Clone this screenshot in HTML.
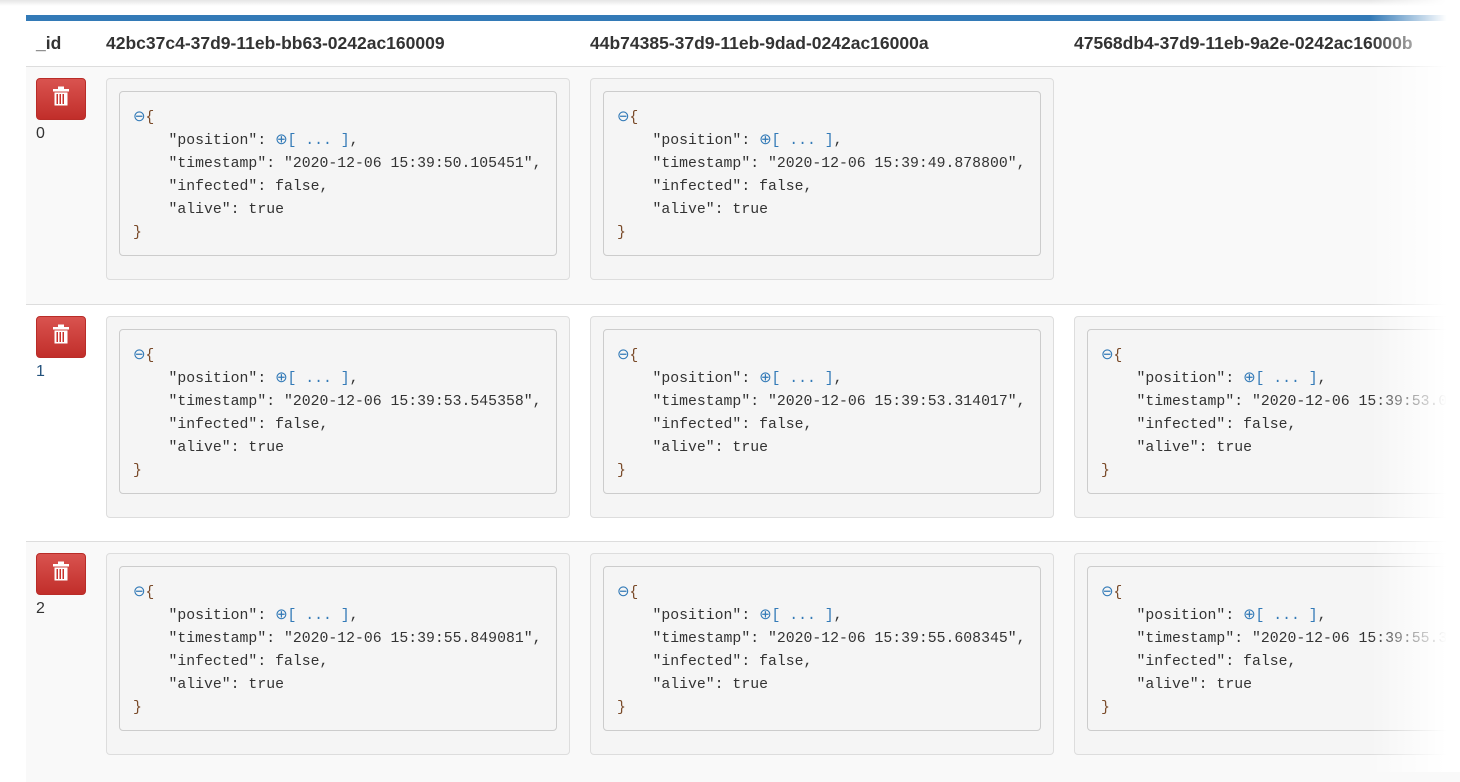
<!DOCTYPE html><html><head><style>
body{margin:0;width:1460px;height:772px;overflow:hidden;background:#fff;font-family:"Liberation Sans",sans-serif;position:relative}
.shadow{position:absolute;left:0;top:0;width:1460px;height:6px;background:linear-gradient(#e6e6e6,#fff)}
.bar{position:absolute;left:26px;top:15px;width:1440px;height:6px;background:#337ab7}
.hdr{position:absolute;top:21px;left:26px;width:1440px;height:45px;border-bottom:2px solid #ddd;font-weight:bold;font-size:17.5px;color:#333}
.hdr span{position:absolute;top:12px}
.row{position:absolute;left:26px;width:1440px;border-bottom:1px solid #ddd}
.btn{position:absolute;left:10px;top:11px;width:50px;height:42px;border-radius:4px;background:linear-gradient(#d9534f,#c12e2a);border:1px solid #b92c28;box-sizing:border-box}
.idx{position:absolute;left:10px;top:58px;font-size:16px;color:#333}
.cell{position:absolute;top:11px;width:464px;height:202px;box-sizing:border-box;background:#f5f5f5;border:1px solid #ddd;border-radius:4px}
.pre{position:absolute;left:12px;top:12px;width:438px;height:165px;box-sizing:border-box;border:1px solid #ccc;border-radius:4px;background:#f5f5f5;padding:15px 0 0 13px;font-family:"Liberation Mono",monospace;font-size:14.8px;line-height:23px;color:#333;white-space:pre}
.b{color:#337ab7}.br{color:#7a4b2a}
.fade{position:absolute;right:0;top:0;width:90px;height:772px;background:linear-gradient(90deg,rgba(255,255,255,0),#fff 85%)}
</style></head><body>
<div class="shadow"></div><div class="bar"></div>
<div class="hdr"><span style="left:10px">_id</span><span style="left:80px">42bc37c4-37d9-11eb-bb63-0242ac160009</span><span style="left:564px">44b74385-37d9-11eb-9dad-0242ac16000a</span><span style="left:1048px">47568db4-37d9-11eb-9a2e-0242ac16000b</span></div>

<div class="row" style="top:67px;height:237px;background:#f9f9f9">
<div class="btn"><svg width="48" height="40"><g fill="#fff"><rect x="16" y="10" width="16" height="2.5"/><rect x="21" y="7.5" width="6" height="3"/><rect x="17.5" y="13.5" width="13" height="13"/></g><g fill="#c9302c"><rect x="19.5" y="15" width="1.5" height="10"/><rect x="22.5" y="15" width="1.5" height="10"/><rect x="25.5" y="15" width="1.5" height="10"/></g></svg></div>
<div class="idx">0</div>
<div class="cell" style="left:80px"><div class="pre"><span class="b">⊖</span><span class="br">{</span>
    "position": <span class="b">⊕[ ... ]</span>,
    "timestamp": "2020-12-06 15:39:50.105451",
    "infected": false,
    "alive": true
<span class="br">}</span></div></div>
<div class="cell" style="left:564px"><div class="pre"><span class="b">⊖</span><span class="br">{</span>
    "position": <span class="b">⊕[ ... ]</span>,
    "timestamp": "2020-12-06 15:39:49.878800",
    "infected": false,
    "alive": true
<span class="br">}</span></div></div>
</div>

<div class="row" style="top:305px;height:236px;background:#fff">
<div class="btn"><svg width="48" height="40"><g fill="#fff"><rect x="16" y="10" width="16" height="2.5"/><rect x="21" y="7.5" width="6" height="3"/><rect x="17.5" y="13.5" width="13" height="13"/></g><g fill="#c9302c"><rect x="19.5" y="15" width="1.5" height="10"/><rect x="22.5" y="15" width="1.5" height="10"/><rect x="25.5" y="15" width="1.5" height="10"/></g></svg></div>
<div class="idx" style="color:#23527c">1</div>
<div class="cell" style="left:80px"><div class="pre"><span class="b">⊖</span><span class="br">{</span>
    "position": <span class="b">⊕[ ... ]</span>,
    "timestamp": "2020-12-06 15:39:53.545358",
    "infected": false,
    "alive": true
<span class="br">}</span></div></div>
<div class="cell" style="left:564px"><div class="pre"><span class="b">⊖</span><span class="br">{</span>
    "position": <span class="b">⊕[ ... ]</span>,
    "timestamp": "2020-12-06 15:39:53.314017",
    "infected": false,
    "alive": true
<span class="br">}</span></div></div>
<div class="cell" style="left:1048px"><div class="pre"><span class="b">⊖</span><span class="br">{</span>
    "position": <span class="b">⊕[ ... ]</span>,
    "timestamp": "2020-12-06 15:39:53.082116",
    "infected": false,
    "alive": true
<span class="br">}</span></div></div>
</div>

<div class="row" style="top:542px;height:240px;background:#f9f9f9;border:none">
<div class="btn"><svg width="48" height="40"><g fill="#fff"><rect x="16" y="10" width="16" height="2.5"/><rect x="21" y="7.5" width="6" height="3"/><rect x="17.5" y="13.5" width="13" height="13"/></g><g fill="#c9302c"><rect x="19.5" y="15" width="1.5" height="10"/><rect x="22.5" y="15" width="1.5" height="10"/><rect x="25.5" y="15" width="1.5" height="10"/></g></svg></div>
<div class="idx">2</div>
<div class="cell" style="left:80px"><div class="pre"><span class="b">⊖</span><span class="br">{</span>
    "position": <span class="b">⊕[ ... ]</span>,
    "timestamp": "2020-12-06 15:39:55.849081",
    "infected": false,
    "alive": true
<span class="br">}</span></div></div>
<div class="cell" style="left:564px"><div class="pre"><span class="b">⊖</span><span class="br">{</span>
    "position": <span class="b">⊕[ ... ]</span>,
    "timestamp": "2020-12-06 15:39:55.608345",
    "infected": false,
    "alive": true
<span class="br">}</span></div></div>
<div class="cell" style="left:1048px"><div class="pre"><span class="b">⊖</span><span class="br">{</span>
    "position": <span class="b">⊕[ ... ]</span>,
    "timestamp": "2020-12-06 15:39:55.367210",
    "infected": false,
    "alive": true
<span class="br">}</span></div></div>
</div>
<div class="fade"></div>
</body></html>
